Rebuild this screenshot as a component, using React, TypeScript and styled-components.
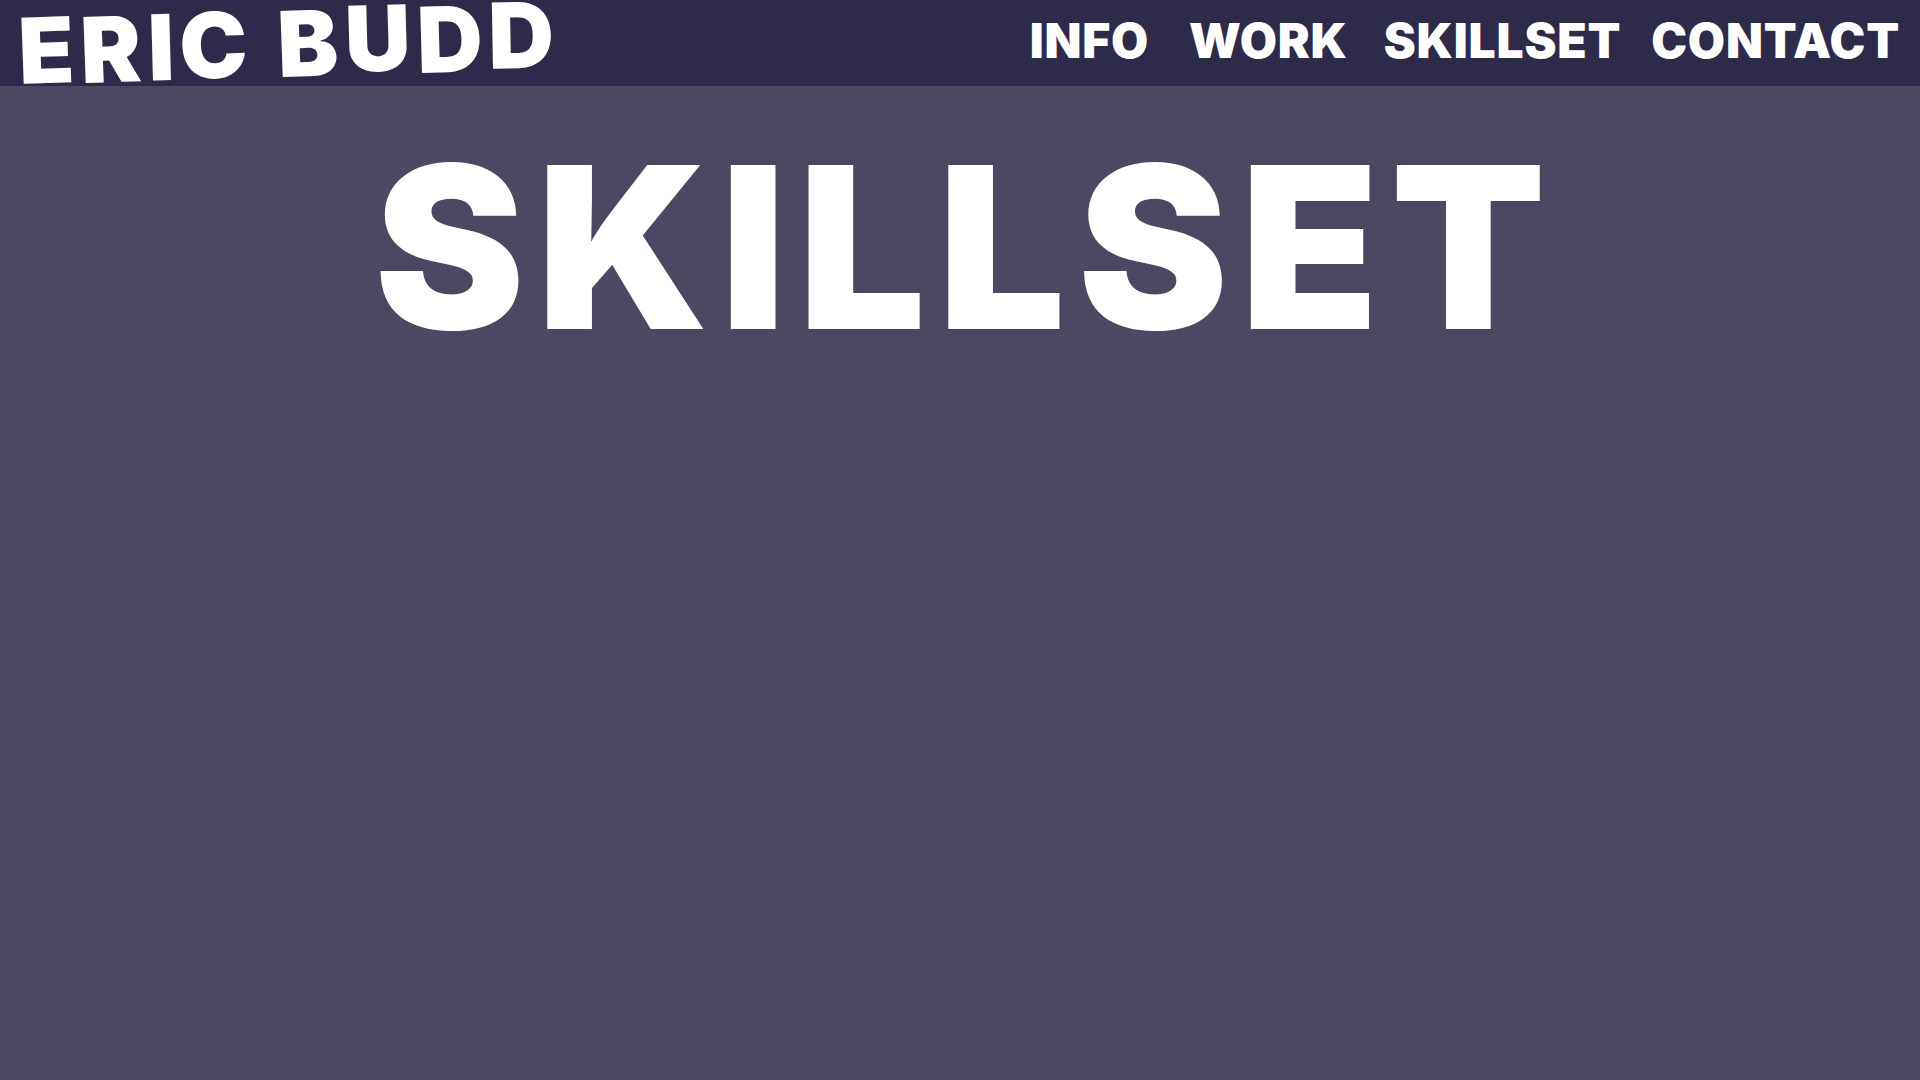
import styled, { createGlobalStyle } from "styled-components";

const GlobalStyle = createGlobalStyle`
    html, body {
        margin: 0;
        padding: 0;
        background-color: #4b4861;
    }
    body {
        font-family: Inter, "Liberation Sans", Arial, sans-serif;
        color: #fff;
    }
`;

const Page = styled.div`
    width: 100%;
    min-height: 100vh;
    background-color: #4b4861;
    display: flex;
    flex-direction: column;
`;

const Header = styled.header`
    height: 86px;
    background-color: #2e2a4a;
    display: flex;
    justify-content: space-between;
    align-items: flex-start;
    padding: 0 20px 0 20px;
`;

const Logo = styled.a`
    display: flex;
    align-items: baseline;
    margin-top: 5px;
    font-size: 91px;
    font-weight: 900;
    line-height: 1;
    letter-spacing: 6px;
    color: #fff;
    text-decoration: none;
    white-space: pre;
`;

const LogoLetter = styled.span<{ $dy: number; $rot: number }>`
    display: inline-block;
    transform-origin: 50% 100%;
    transform: translateY(${(p) => p.$dy}px) rotate(${(p) => p.$rot}deg);
`;

const Nav = styled.nav`
    display: flex;
    align-items: baseline;
    padding-top: 17px;
`;

const NavLink = styled.a<{ $space: number }>`
    margin-left: ${(p) => p.$space}px;
    font-size: 48px;
    font-weight: 900;
    line-height: 1;
    letter-spacing: 0.8px;
    color: #fff;
    text-decoration: none;
    cursor: pointer;
`;

const Main = styled.main`
    display: flex;
    justify-content: center;
`;

const Title = styled.h1`
    margin: 48px 0 0;
    padding-left: 12px;
    font-size: 226px;
    font-weight: 900;
    line-height: 1;
    letter-spacing: 12px;
    color: #fff;
`;

const logo: [string, number, number][] = [
    ["E", 0, -2],
    ["R", -1, -2],
    ["I", -3, -1.5],
    ["C", -5, -2],
    [" ", -6, 0],
    ["B", -7, -2],
    ["U", -12, -1.5],
    ["D", -11, -1.5],
    ["D", -15, -1],
];

const links: [string, number][] = [
    ["INFO", 0],
    ["WORK", 40],
    ["SKILLSET", 36],
    ["CONTACT", 30],
];

const App = () => {
    return (
        <Page>
            <GlobalStyle />
            <Header>
                <Logo href="#">
                    {logo.map(([ch, dy, rot], i) => (
                        <LogoLetter key={i} $dy={dy} $rot={rot}>
                            {ch}
                        </LogoLetter>
                    ))}
                </Logo>
                <Nav>
                    {links.map(([l, space]) => (
                        <NavLink key={l} $space={space}>
                            {l}
                        </NavLink>
                    ))}
                </Nav>
            </Header>
            <Main>
                <Title>SKILLSET</Title>
            </Main>
        </Page>
    );
};

export default App;
